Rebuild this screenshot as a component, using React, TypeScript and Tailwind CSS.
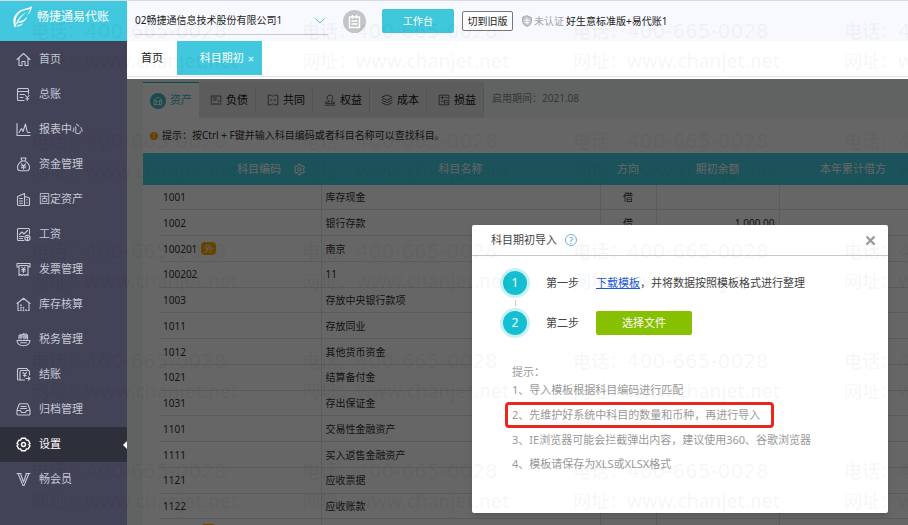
import React from 'react';
import { Settings, ChevronDown, Layers } from 'lucide-react';

const iconProps = {
    width: 15,
    height: 15,
    viewBox: '0 0 15 15',
    fill: 'none',
    stroke: 'currentColor',
    strokeWidth: 1.1,
    strokeLinecap: 'round' as const,
    strokeLinejoin: 'round' as const,
};

const HomeIcon = () => (
    <svg {...iconProps}>
        <path d="M1 7.5 7.5 1.5 14 7.5M3 6v7.5h3V9.5h3v4h3V6" />
    </svg>
);

const LedgerIcon = () => (
    <svg {...iconProps}>
        <path d="M12.5 7V2.500a1 1 0 0 0-1-1h-9a1 1 0 0 0-1 1v10a1 1 0 0 0 1 1H8M1.5 4.5h11M4 7.5h4.5M4 10.5h3M9.5 8.5l1.8 2 1.8-2M11.3 10.5v3M9.8 11.7h3" />
    </svg>
);

const ReportIcon = () => (
    <svg {...iconProps}>
        <path d="M1 1.5v12h13M3 10.5l2.5-4 1.5 3 2.5-7.5 1.5 7 1 1.5h2" />
    </svg>
);

const MoneyIcon = () => (
    <svg {...iconProps}>
        <path d="M5 1h5l-1 3H6zM6 4C3.5 5.5 1.5 8 1.5 10.5c0 2 1.2 3.3 3 3.3h6c1.8 0 3-1.3 3-3.3C13.5 8 11.5 5.5 9 4M5.5 6.8l2 2.2 2-2.2M7.5 9v3M5.3 9h4.4M5.3 10.7h4.4" />
    </svg>
);

const AssetIcon = () => (
    <svg {...iconProps}>
        <path d="M2.500 13.500a1 1 0 0 1-1-1V4.500L8.500 1.500v12zM8.500 4.500l4 1a1 1 0 0 1 1 1v6a1 1 0 0 1-1 1h-10M3.500 6.500h3M3.500 9h3M3.500 11.300h3M11 7.500v.5M11 10.500v.5" />
    </svg>
);

const SalaryIcon = () => (
    <svg {...iconProps}>
        <path d="M13.5 7V2.500a1 1 0 0 0-1-1h-10a1 1 0 0 0-1 1v10a1 1 0 0 0 1 1H8M3.5 7.5 6 5l2 2 3.5-3.500M3.5 9.5h4M3.5 11.5h3" />
        <circle cx="11.5" cy="11" r="2.6" />
        <path d="M10.5 10.5h2M11.5 10v2.5" />
    </svg>
);

const InvoiceIcon = () => (
    <svg {...iconProps}>
        <path d="M3 5H1V1.500h13V5h-2M3 3.500h9v10l-1.500-1-1.500 1-1.500-1-1.500 1-1.500-1-1.500 1zM5.800 5l1.700 2 1.700-2M7.500 7v3.500M5.800 7.500h3.400M5.800 9h3.400" />
    </svg>
);

const StockIcon = () => (
    <svg {...iconProps}>
        <path d="M1 6.500 7.500 1.200 14 6.500M2 6v7.500h1M13 6v7.500h-1" />
        <path d="M5 8v.5M5 10.500v.5M7.500 10.500v.5M5 13v.5M7.500 13v.5M10 13v.5" strokeWidth="1.600" />
    </svg>
);

const TaxIcon = () => (
    <svg {...iconProps}>
        <path d="M1 8.500h13c-.3 3.200-3 5.200-6.500 5.200S1.300 11.700 1 8.500zM4.500 10.800h6" />
        <path d="M3 7V3.500l2-1V7M5 4l3-2.500V7M8 3h3.500v4M10 1.500V7M4 5h7" />
    </svg>
);

const ClosingIcon = () => (
    <svg {...iconProps}>
        <path d="M3.500 13h-1a1 1 0 0 1-1-1V2.500a1 1 0 0 1 1-1h8a1 1 0 0 1 1 1M8.500 13H5a1 1 0 0 1-1-1V4.500a1 1 0 0 1 1-1h7.500a1 1 0 0 1 1 1V8M7 5.500l1.700 1.800 1.700-1.800M8.700 7.300v2.500M7.300 8.500h2.800M10 11.500h4M12.300 9.800l1.700 1.700-1.700 1.700" />
    </svg>
);

const ArchiveIcon = () => (
    <svg {...iconProps}>
        <path d="M1 8l2-5.500a1 1 0 0 1 1-.7h7a1 1 0 0 1 1 .7L14 8v4a1 1 0 0 1-1 1H2a1 1 0 0 1-1-1zM1 8.500h3.500l1 2h4l1-2H14M5 4.500h5M4.500 6.500h6" />
    </svg>
);

const GearIcon = () => (
    <svg {...iconProps} strokeWidth={1.4}>
        <path d="M5.500 1.200h4l.8 1.800 2 .2 1.700 3.300-1.200 1 1.200 1.200-1.700 3.100-2 .2-.8 1.800h-4L4.700 12l-2-.2L1 8.700l1.200-1.200L1 6.500l1.700-3.300 2-.2z" />
        <circle cx="7.500" cy="7.500" r="2" />
    </svg>
);

const MemberIcon = () => (
    <svg {...iconProps}>
        <path d="M1 1.500h4M10 1.500h4M2 1.500l5 12h1l5-12M4.500 1.500l3 8.500 3-8.500" />
    </svg>
);

const menu = [
    { label: '首页', Icon: HomeIcon },
    { label: '总账', Icon: LedgerIcon },
    { label: '报表中心', Icon: ReportIcon },
    { label: '资金管理', Icon: MoneyIcon },
    { label: '固定资产', Icon: AssetIcon },
    { label: '工资', Icon: SalaryIcon },
    { label: '发票管理', Icon: InvoiceIcon },
    { label: '库存核算', Icon: StockIcon },
    { label: '税务管理', Icon: TaxIcon },
    { label: '结账', Icon: ClosingIcon },
    { label: '归档管理', Icon: ArchiveIcon },
    { label: '设置', Icon: GearIcon, active: true },
    { label: '畅会员', Icon: MemberIcon },
];

const DebtIcon = () => (
    <svg {...iconProps} className="size-3">
        <path d="M1.500 10V2.500h12V10M1 12.500h13M4 5h4M4 7.500h3M9 7l3 3" />
    </svg>
);

const CommonIcon = () => (
    <svg {...iconProps} className="size-3">
        <path d="M5.500 1.500h-4v12h4M9.500 1.500h4v12h-4M4 7.500h2M9 7.500h2M7.500 2v1M7.500 12v1" />
    </svg>
);

const EquityIcon = () => (
    <svg {...iconProps} className="size-3">
        <path d="M6 8.500C4.500 7.500 4 6 4 4.700a3.500 3.500 0 0 1 7 0c0 1.300-.5 2.800-2 3.800v1.500h4v2H2v-2h4zM1.500 14h12" />
    </svg>
);

const ProfitIcon = () => (
    <svg {...iconProps} className="size-3">
        <path d="M13.500 6V1.500h-12v12H7M4 4.500h3M5.500 3v3M9 4.500h2.500M4 9h3M8.500 8h5v5.500h-5zM10 10.800h2" />
    </svg>
);

const categories = [
    { label: '负债', icon: <DebtIcon /> },
    { label: '共同', icon: <CommonIcon /> },
    { label: '权益', icon: <EquityIcon /> },
    { label: '成本', icon: <Layers className="size-3" strokeWidth={2} /> },
    { label: '损益', icon: <ProfitIcon /> },
];

const accounts = [
    { code: '1001', name: '库存现金', direction: '借', amount: '' },
    { code: '1002', name: '银行存款', direction: '借', amount: '1,000.00' },
    { code: '100201', name: '南京', direction: '', amount: '', foreign: true },
    { code: '100202', name: '11', direction: '', amount: '' },
    { code: '1003', name: '存放中央银行款项', direction: '', amount: '' },
    { code: '1011', name: '存放同业', direction: '', amount: '' },
    { code: '1012', name: '其他货币资金', direction: '', amount: '' },
    { code: '1021', name: '结算备付金', direction: '', amount: '' },
    { code: '1031', name: '存出保证金', direction: '', amount: '' },
    { code: '1101', name: '交易性金融资产', direction: '', amount: '' },
    { code: '1111', name: '买入返售金融资产', direction: '', amount: '' },
    { code: '1121', name: '应收票据', direction: '', amount: '' },
    { code: '1122', name: '应收账款', direction: '', amount: '' },
];

const Sidebar = () => (
    <aside className="w-[127px] shrink-0 bg-[#434358]">
        <div className="flex h-[41px] items-center gap-1 border-t border-[#d9dbe2] bg-[#41c8de] pb-2 pl-3 text-white">
            <svg viewBox="0 0 21 24" className="h-6 w-[21px]" fill="white">
                <path d="M3 23C0 17 1 11 6 7c4-3.500 10-3 14-6-.5 4-2 7-5 9.500 1-2.500 2.500-4 3.300-7C14 5.500 10.500 5 7.500 8 3.500 12 3 16 4 20z" />
                <path d="M4 20C5 14 9 10 14 7.500 10 11 7 14 6 18zM7 16.500c3-.2 6-2 8-5-.5 3.500-3.500 6.500-8.500 6.500zM5.500 20c2 0 4-.7 5.500-2-1 2.500-3.500 4-6.500 3.500z" />
            </svg>
            <span className="text-xs">畅捷通易代账</span>
        </div>
        <nav className="pt-px">
            {menu.map(({ label, Icon, active }) => (
                <a
                    key={label}
                    href="#"
                    className={`flex h-[35px] items-center gap-2 pl-4 text-[11px] ${active ? 'bg-[#2d2f3b] text-white' : 'text-[#c3cad6]'}`}
                >
                    <Icon />
                    <span className="grow">{label}</span>
                    {active && <span className="border-y-4 border-r-4 border-y-transparent border-r-white" />}
                </a>
            ))}
        </nav>
    </aside>
);

const TopBar = () => (
    <header className="flex h-[41px] shrink-0 items-center border-t border-[#d9dbe2] bg-[#f8f9fe] pl-2 text-[10px] text-[#222]">
        <button className="flex h-[27px] w-[193px] shrink-0 items-center justify-between border-b border-[#c8cad0]">
            02畅捷通信息技术股份有限公司1
            <ChevronDown className="size-4 text-[#3fc4d8]" strokeWidth={1.5} />
        </button>
        <button aria-label="记事" className="ml-[15px] flex size-[23px] shrink-0 items-center justify-center rounded-full bg-[#c4c5c8] text-white">
            <svg {...iconProps} strokeWidth={1.4}>
                <path d="M2.500 3h10v10.500h-10zM5.500 1.500v2.500M9.500 1.500v2.500M5 7h5M5 10h5" />
            </svg>
        </button>
        <button className="ml-4 h-6 w-[72px] shrink-0 rounded-xs bg-[#3fc7dc] text-white">工作台</button>
        <button className="ml-2 h-5 w-[51px] shrink-0 rounded-xs border border-[#777] bg-white">切到旧版</button>
        <span className="ml-2 flex shrink-0 items-center gap-px text-[#a3a5aa]">
            <svg {...iconProps} className="size-3">
                <path d="M7.500 1 13 3v5c0 3-2 5-5.500 6.200C4 13 2 11 2 8V3z" fill="#c4c5c8" />
                <path d="M4.500 6.500h6M7.500 4v7M5 9.500h5" stroke="white" />
            </svg>
            未认证
        </span>
        <span className="ml-[2px] shrink-0">好生意标准版+易代账1</span>
    </header>
);

const PageTabs = () => (
    <div className="h-[38px] shrink-0 bg-white text-[11px]">
        <div className="flex h-9 border-b border-[#e4e4e4]">
            <button className="h-[35px] w-[50px] text-[#222]">首页</button>
            <div className="flex h-[34px] w-[85px] items-center justify-end gap-1 bg-[#41c8de] pr-2 text-white">
                <button>科目期初</button>
                <button aria-label="关闭标签" className="leading-none">×</button>
            </div>
        </div>
    </div>
);

const CategoryTabs = () => (
    <div className="flex h-9 items-stretch text-[11px]">
        <button className="flex w-14 items-center justify-center gap-1 border-t border-[#20b4c8] bg-white text-[#3cb8c8]">
            <span className="flex size-4 items-center justify-center rounded-full bg-[#3cb8c8] text-white">
                <svg {...iconProps} className="size-3">
                    <path d="M3 6.500C4 2 11 2 12 6.500M3 6.500h2v6H3zM10 6.500h2v6h-2zM5 8h5M5 12h5" />
                </svg>
            </span>
            资产
        </button>
        {categories.map(({ label, icon }) => (
            <button key={label} className="flex w-[57px] items-center bg-[#e6e6e6] text-[#111]">
                <span className="flex h-6 w-full items-center justify-center gap-1 border-r border-[#cfcfcf] pl-1">
                    <span className="text-[#555]">{icon}</span>
                    {label}
                </span>
            </button>
        ))}
        <span className="pl-2 pt-[9px] text-[10px] text-[#888]">启用期间：2021.08</span>
    </div>
);

const AccountTable = () => (
    <table className="h-[391px] w-full min-w-[784px] table-fixed border-collapse text-[10px] leading-4 text-[#333]">
        <colgroup>
            <col className="w-[17px]" />
            <col className="w-[161px]" />
            <col />
            <col className="w-[56px]" />
            <col className="w-[123px]" />
            <col className="w-[148px]" />
        </colgroup>
        <thead>
            <tr className="h-8 bg-[#46cfe2] text-[11px] text-white">
                <th colSpan={2} className="pl-[94px] text-left font-normal">
                    <span className="flex items-center gap-3">
                        科目编码
                        <Settings className="size-[13px]" />
                    </span>
                </th>
                <th className="font-normal">科目名称</th>
                <th className="font-normal">方向</th>
                <th className="font-normal">期初余额</th>
                <th className="font-normal">本年累计借方</th>
            </tr>
        </thead>
        <tbody>
            {accounts.map((a) => (
                <tr key={a.code}>
                    <td />
                    <td className="border-b border-r border-[#e0e4e6] pl-[3px]">
                        <span className="flex items-center gap-1">
                            {a.code}
                            {a.foreign && <span className="h-[13px] w-[15px] rounded-sm bg-[#ffa800] text-center text-[9px] leading-[13px] text-white">外</span>}
                        </span>
                    </td>
                    <td className="border-b border-r border-[#e0e4e6] pl-1">{a.name}</td>
                    <td className="border-b border-r border-[#e0e4e6] text-center">{a.direction}</td>
                    <td className="border-b border-r border-[#e0e4e6] pr-1 text-right">{a.amount}</td>
                    <td className="border-b border-[#e0e4e6]" />
                </tr>
            ))}
            <tr>
                <td />
                <td className="border-r border-[#e0e4e6] pl-[41px]">
                    <span className="block h-4 w-[15px] rounded-sm bg-[#ffa800]" />
                </td>
                <td className="border-r border-[#e0e4e6]" />
                <td className="border-r border-[#e0e4e6]" />
                <td className="border-r border-[#e0e4e6]" />
                <td />
            </tr>
        </tbody>
    </table>
);

const Step = ({ n, title, children }: { n: number; title: string; children: React.ReactNode }) => (
    <li className="flex h-10 items-center">
        <span className="flex size-[30px] items-center justify-center rounded-full border-3 border-[#c9f0f4] bg-[#13bfd0] text-xs text-white">{n}</span>
        <span className="ml-4 w-[50px]">{title}</span>
        {children}
    </li>
);

const ImportDialog = () => (
    <section role="dialog" aria-label="科目期初导入" className="absolute right-5 top-[146px] h-[288px] w-[416px] rounded-xs bg-white text-[11px] text-[#444] shadow-md">
        <div className="flex h-[31px] items-center border-b border-[#c8c8c8] pl-[19px] pr-3">
            <h2>科目期初导入</h2>
            <button aria-label="帮助" className="ml-2 flex size-3 items-center justify-center rounded-full border border-[#6db3d8] text-[9px] leading-none text-[#4fa3d0]">?</button>
            <button aria-label="关闭" className="ml-auto text-[#999]">
                <svg width="11" height="11" viewBox="0 0 11 11" stroke="currentColor" strokeWidth="2.2">
                    <path d="M1.500 1.500l8 8M9.500 1.500l-8 8" />
                </svg>
            </button>
        </div>
        <div className="relative pl-7 pt-[7px]">
            <ol>
                <Step n={1} title="第一步">
                    <a href="#" className="text-[#2459d8] underline">下载模板</a>
                    <span>，并将数据按照模板格式进行整理</span>
                </Step>
                <Step n={2} title="第二步">
                    <button className="h-6 w-24 rounded-xs bg-[#86c000] text-white">选择文件</button>
                </Step>
            </ol>
            {/* line joining the two steps */}
            <span className="absolute left-[43px] top-11 h-[6px] w-px bg-[#ccc]" />
        </div>
        <div className="pl-[33px] pt-[19px] text-[#999]">
            <p className="h-5 pl-[7px] leading-5">提示：</p>
            <ul className="leading-6">
                <li className="-mt-1 pl-[7px]">1、导入模板根据科目编码进行匹配</li>
                <li className="w-[269px] rounded-sm border-3 border-[#e8281e] pl-1 leading-[20px]">2、先维护好系统中科目的数量和币种，再进行导入</li>
                <li className="pl-[7px]">3、IE浏览器可能会拦截弹出内容，建议使用360、谷歌浏览器</li>
                <li className="pl-[7px]">4、模板请保存为XLS或XLSX格式</li>
            </ul>
        </div>
    </section>
);

// Contact details repeated over the whole page
const Watermark = () => (
    <div aria-hidden="true" className="pointer-events-none absolute inset-0 overflow-hidden">
        <div className="grid grid-cols-[repeat(4,271px)] pl-[31px] pt-4 text-black/5">
            {Array.from({ length: 20 }, (_, i) => (
                <div key={i} className="h-[110px] whitespace-nowrap text-[18px] font-medium leading-[30px]">
                    <div className="flex">
                        电话：<span className="font-['DejaVu_Sans',sans-serif] text-[20px]">400-665-0028</span>
                    </div>
                    <div className="flex">
                        网址：<span className="text-[19px]">www.chanjet.net</span>
                    </div>
                </div>
            ))}
        </div>
    </div>
);

export default function App() {
    return (
        <div className="relative flex h-screen overflow-hidden font-['Noto_Sans','Noto_Sans_CJK_SC',sans-serif]">
            <Sidebar />
            <div className="flex min-w-0 grow flex-col">
                <TopBar />
                <PageTabs />
                <main className="relative min-h-0 grow">
                    <div className="h-full overflow-hidden bg-[#f2f7f5] pl-4 pt-[3px]">
                        <CategoryTabs />
                        <div className="bg-white">
                            <p className="flex h-[35px] items-center gap-1 pl-[7px] text-[10px] text-[#333]">
                                <span className="flex size-2 items-center justify-center rounded-full bg-[#ffa800] text-[7px] leading-none text-white">!</span>
                                提示：按Ctrl + F键并输入科目编码或者科目名称可以查找科目。
                            </p>
                            <AccountTable />
                        </div>
                    </div>
                    <div className="absolute inset-0 bg-black/60" />
                    <ImportDialog />
                </main>
            </div>
            <Watermark />
        </div>
    );
}
